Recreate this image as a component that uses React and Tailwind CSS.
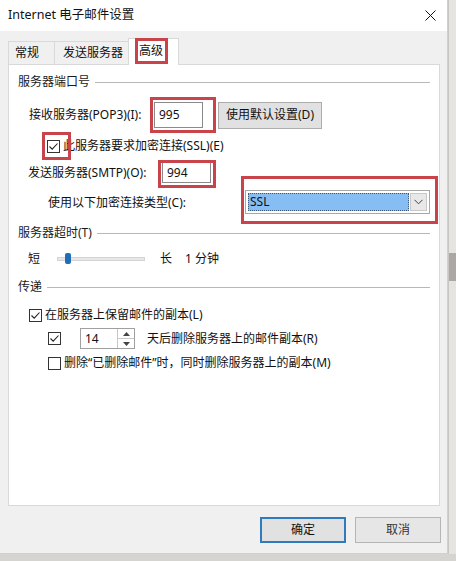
import React from "react";

function Check({ checked }) {
  return (
    <div className="w-[13px] h-[13px] border border-[#333333] bg-white flex items-center justify-center shrink-0">
      {checked && (
        <svg width="11" height="11" viewBox="0 0 11 11">
          <path d="M1.5 5.5 L4.2 8.2 L9.5 2.5" fill="none" stroke="#222" strokeWidth="1.1" />
        </svg>
      )}
    </div>
  );
}

function Header({ children, mt }) {
  return (
    <div className={`flex items-center h-[20px] pl-[9px] pr-[9px] ${mt}`}>
      <span className="text-[#1a1a1a]">{children}</span>
      <div className="flex-1 h-px bg-[#b8b8b8] ml-[5px]" />
    </div>
  );
}

export default function App() {
  return (
    <div className="w-[456px] h-[561px] bg-[#d6d4d1] flex items-start overflow-hidden font-['Noto_Sans','Noto_Sans_CJK_SC',sans-serif] text-[12px] leading-none text-[#111]">
      <div className="w-[448px] h-[554px] bg-[#f0f0f0] border-r border-b border-[#d8cfc2] flex flex-col shrink-0">
        {/* title bar */}
        <div className="h-[31px] bg-white flex items-center justify-between pl-[8px] pr-[11px] shrink-0">
          <span className="text-[12.5px] text-[#111]">Internet 电子邮件设置</span>
          <svg width="11" height="11" viewBox="0 0 11 11">
            <path d="M0.5 0.5 L10.5 10.5 M10.5 0.5 L0.5 10.5" stroke="#111" strokeWidth="1" />
          </svg>
        </div>

        {/* tabs */}
        <div className="relative h-[26px] mt-[7px] ml-[8px] flex items-end shrink-0">
          <div className="h-[23px] w-[47px] border-t border-l border-r border-[#d9d9d9] bg-[#f0f0f0] flex items-center pl-[6px]">常规</div>
          <div className="h-[23px] w-[74px] border-t border-r border-[#d9d9d9] bg-[#f0f0f0] flex items-center pl-[8px]">发送服务器</div>
          <div className="relative z-10 h-[27px] w-[51px] -ml-px -mb-px border-t border-l border-r border-[#d9d9d9] bg-white flex items-center pl-[10px] pb-[2px]">高级</div>
          <div className="absolute z-20 left-[127px] top-0 w-[33px] h-[26px] border-[3px] border-[#c9434b]" />
        </div>

        {/* panel */}
        <div className="relative ml-[8px] w-[432px] h-[442px] bg-white border border-[#d9d9d9] flex flex-col shrink-0">
          <Header mt="mt-[7px]">服务器端口号</Header>

          <div className="flex items-center h-[28px] mt-[9px] pl-[20px]">
            <span className="w-[125px]">接收服务器(POP3)(I):</span>
            <div className="w-[49px] h-[26px] border border-[#8a8a8a] bg-white flex items-center pl-[4px]">995</div>
            <div className="ml-[15px] w-[104px] h-[27px] border border-[#adadad] bg-[#e1e1e1] flex items-center justify-center">使用默认设置(D)</div>
          </div>

          <div className="flex items-center h-[20px] mt-[7px] pl-[38px]">
            <Check checked />
            <span className="ml-[3px]">此服务器要求加密连接(SSL)(E)</span>
          </div>

          <div className="flex items-center h-[23px] mt-[5px] pl-[19px]">
            <span className="w-[134px]">发送服务器(SMTP)(O):</span>
            <div className="w-[49px] h-[21px] border border-[#8a8a8a] bg-white flex items-center pl-[4px]">994</div>
          </div>

          <div className="flex items-center h-[24px] mt-[6px] pl-[39px]">
            <span className="w-[197px] pt-[2px]">使用以下加密连接类型(C):</span>
            <div className="w-[185px] h-[24px] border border-[#a8a8a8] bg-white flex p-[2px]">
              <div className="flex-1 bg-[#86bdf3] border border-dotted border-[#3a5a80] flex items-center pl-[1px]">SSL</div>
              <div className="w-[17px] ml-[1px] bg-[#e8e8e8] border border-[#c8c8c8] flex items-center justify-center">
                <svg width="9" height="6" viewBox="0 0 9 6">
                  <path d="M0.5 0.8 L4.5 4.8 L8.5 0.8" fill="none" stroke="#444" strokeWidth="1" />
                </svg>
              </div>
            </div>
          </div>

          <Header mt="mt-[9px]">服务器超时(T)</Header>

          <div className="flex items-center h-[20px] mt-[6px] pl-[19px]">
            <span>短</span>
            <div className="relative ml-[17px] w-[88px] h-[4px] bg-[#e7e7e7] border border-[#d4d4d4]">
              <div className="absolute left-[7px] top-[-5px] w-[6px] h-[11px] rounded-[2px] bg-[#1f6fb8]" />
            </div>
            <span className="ml-[15px]">长</span>
            <span className="ml-[13px]">1 分钟</span>
          </div>

          <Header mt="mt-[8px]">传递</Header>

          <div className="flex items-center h-[20px] mt-[8px] pl-[20px]">
            <Check checked />
            <span className="ml-[3px]">在服务器上保留邮件的副本(L)</span>
          </div>

          <div className="flex items-center h-[21px] mt-[3px] pl-[39px]">
            <Check checked />
            <div className="ml-[19px] w-[55px] h-[21px] border border-[#a0a0a0] bg-white flex">
              <div className="flex-1 flex items-center pl-[4px]">14</div>
              <div className="w-[17px] border-l border-[#c8c8c8] flex flex-col">
                <div className="flex-1 flex items-center justify-center border-b border-[#c8c8c8]">
                  <svg width="7" height="4" viewBox="0 0 7 4"><path d="M0 4 L3.5 0 L7 4 Z" fill="#444" /></svg>
                </div>
                <div className="flex-1 flex items-center justify-center">
                  <svg width="7" height="4" viewBox="0 0 7 4"><path d="M0 0 L3.5 4 L7 0 Z" fill="#444" /></svg>
                </div>
              </div>
            </div>
            <span className="ml-[12px]">天后删除服务器上的邮件副本(R)</span>
          </div>

          <div className="flex items-center h-[20px] mt-[4px] pl-[39px]">
            <Check />
            <span className="ml-[3px]">删除“已删除邮件”时，同时删除服务器上的副本(M)</span>
          </div>

          {/* red annotation boxes */}
          <div className="absolute left-[141px] top-[32px] w-[66px] h-[36px] border-[3px] border-[#c9434b]" />
          <div className="absolute left-[33px] top-[67px] w-[29px] h-[28px] border-[3px] border-[#c9434b]" />
          <div className="absolute left-[149px] top-[95px] w-[58px] h-[28px] border-[3px] border-[#c9434b]" />
          <div className="absolute left-[232px] top-[111px] w-[197px] h-[48px] border-[3px] border-[#c9434b]" />
        </div>

        {/* buttons */}
        <div className="flex justify-end gap-[9px] pr-[6px] mt-[11px]">
          <div className="w-[86px] h-[26px] border-2 border-[#2f7bbd] bg-[#e1e1e1] flex items-center justify-center">确定</div>
          <div className="w-[86px] h-[26px] border border-[#b5b5b5] bg-[#e6e6e6] flex items-center justify-center text-[#333]">取消</div>
        </div>
      </div>

      {/* right strip */}
      <div className="flex-1 h-[554px] bg-[#e6e4e1] border-l border-[#c9c6c2] flex flex-col">
        <div className="mt-[253px] h-[28px] bg-[#aaa7a4]" />
      </div>
    </div>
  );
}
